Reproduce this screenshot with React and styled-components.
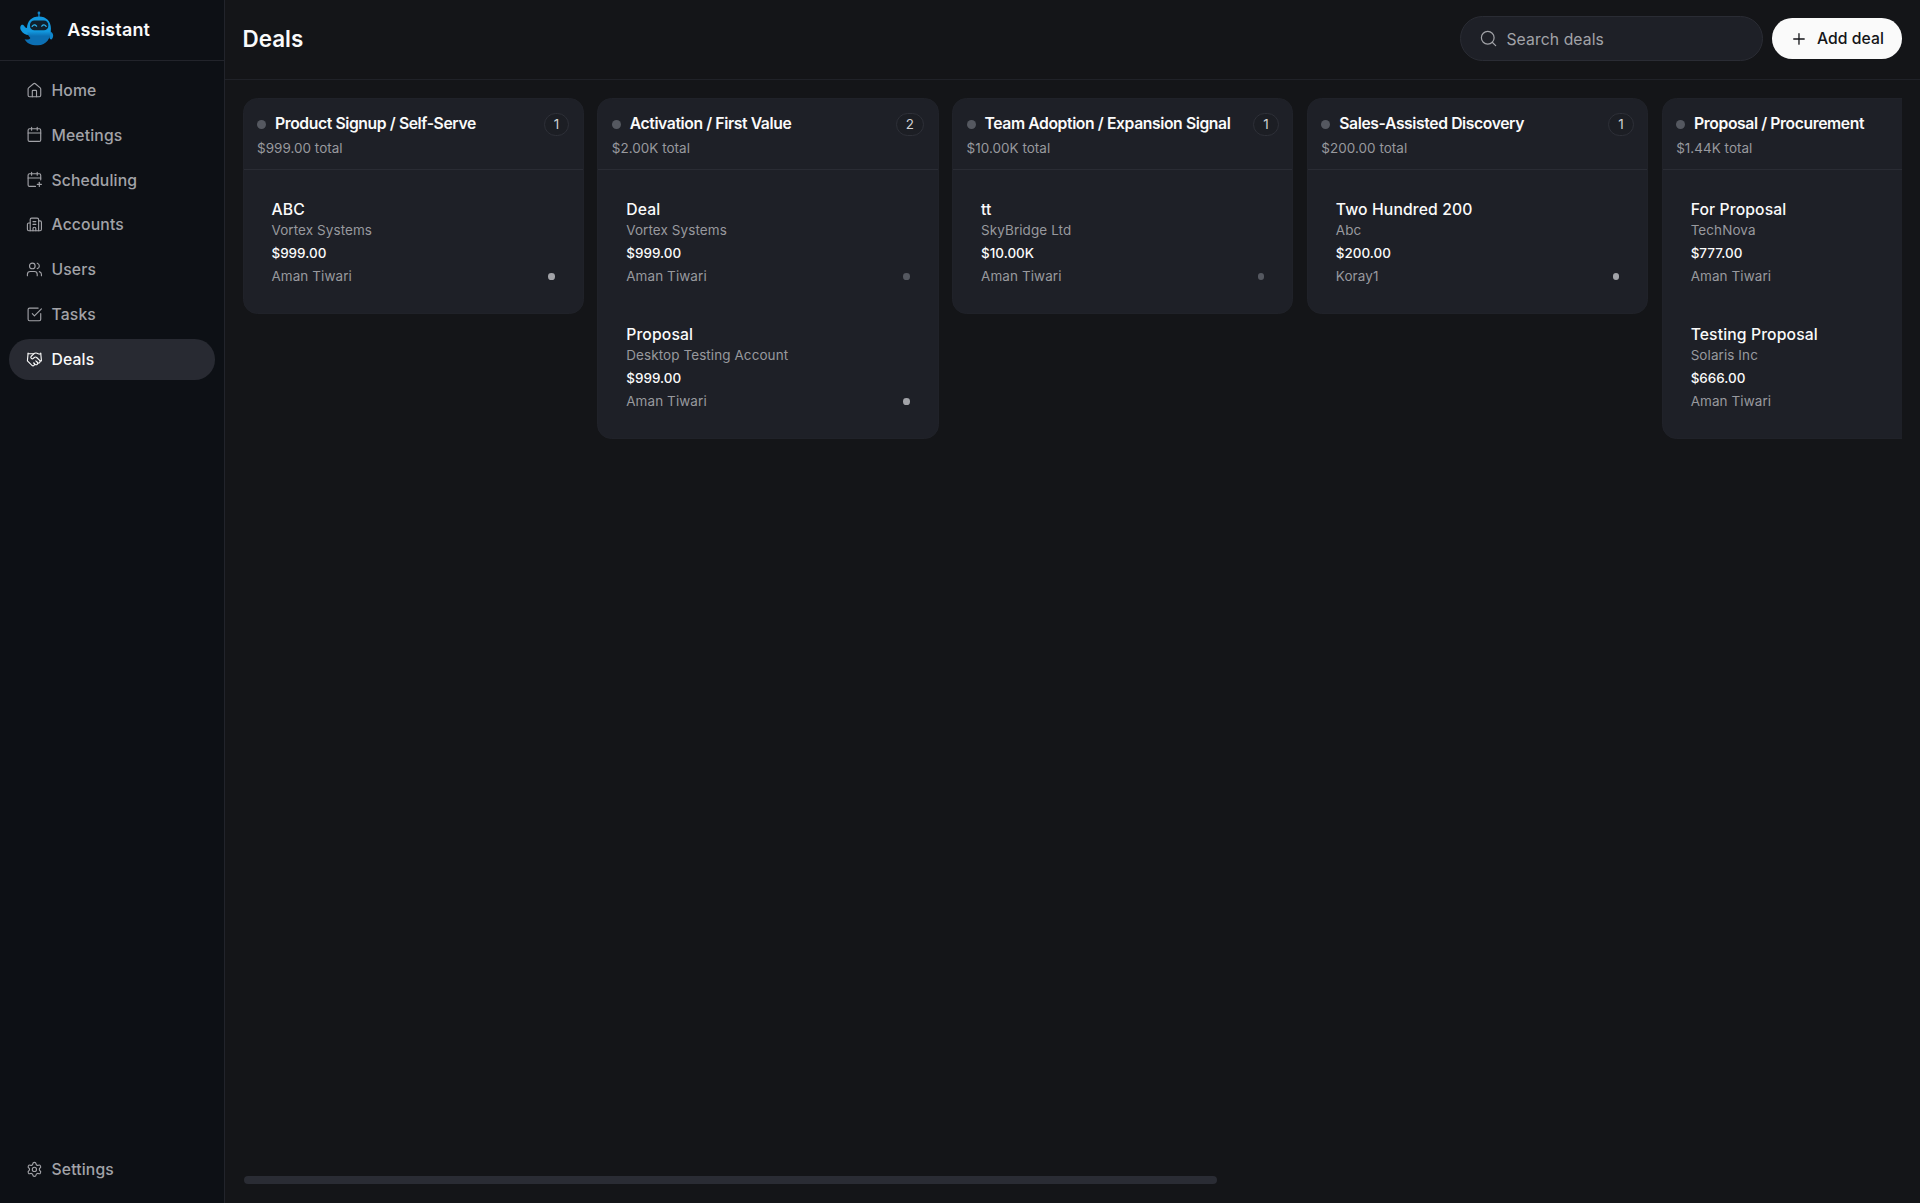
import React from "react";
import styled, { createGlobalStyle } from "styled-components";
import {
  House,
  Calendar,
  CalendarPlus,
  Building2,
  Users,
  SquareCheckBig,
  Handshake,
  Settings,
  Search,
  Plus,
} from "lucide-react";

const GlobalStyle = createGlobalStyle`
  *, *::before, *::after { box-sizing: border-box; }
  html { font-size: calc(100vw / 106.875); }
  body {
    margin: 0;
    background: #141518;
    color: #fafafa;
    font-family: Inter, "Liberation Sans", sans-serif;
    font-size: 0.875rem;
    letter-spacing: 0.01em;
    -webkit-font-smoothing: antialiased;
  }
  button, input { font: inherit; color: inherit; letter-spacing: inherit; }
`;

const Shell = styled.div`
  display: flex;
  height: 100vh;
  overflow: hidden;
`;

const Sidebar = styled.aside`
  display: flex;
  flex-direction: column;
  flex: none;
  width: 12.5rem;
  background: #0d1015;
  border-right: 1px solid #22242b;
`;

const Brand = styled.div`
  display: flex;
  align-items: center;
  gap: 0.75rem;
  height: 3.39rem;
  padding: 0 1rem 0.125rem;
  border-bottom: 1px solid #22242b;
`;

const BrandName = styled.span`
  padding-top: 0.1875rem;
  font-size: 1rem;
  font-weight: 600;
  line-height: 1.5rem;
`;

const LogoMark = styled.svg`
  display: block;
  width: 2rem;
  height: 2rem;
`;

const Nav = styled.nav`
  display: flex;
  flex-direction: column;
  flex: 1;
  gap: 0.25rem;
  padding: 0.5rem 0.5rem 0.75rem;
`;

const NavItem = styled.a`
  display: flex;
  align-items: center;
  gap: 0.46rem;
  height: 2.25rem;
  padding: 0.11rem 0.97rem 0;
  border-radius: 1.125rem;
  background: ${(p) => (p.$active ? "#282a32" : "transparent")};
  color: ${(p) => (p.$active ? "#fafafa" : "#a2a3a8")};
  font-weight: 500;
  line-height: 1.25rem;
  margin-top: ${(p) => (p.$last ? "auto" : 0)};
  svg { width: 0.9375rem; height: 0.9375rem; flex: none; margin-bottom: 0.125rem; }
`;

const Main = styled.main`
  display: flex;
  flex-direction: column;
  flex: 1;
  min-width: 0;
`;

const Header = styled.header`
  display: flex;
  align-items: center;
  justify-content: space-between;
  height: 4.4375rem;
  padding: 0 1rem 0.125rem;
  border-bottom: 1px solid #202228;
`;

const PageTitle = styled.h1`
  margin: 0;
  font-size: 1.25rem;
  font-weight: 600;
  line-height: 1.75rem;
  letter-spacing: 0;
`;

const Actions = styled.div`
  display: flex;
  align-items: center;
  gap: 0.5rem;
`;

const SearchField = styled.label`
  display: flex;
  align-items: center;
  gap: 0.48rem;
  width: 16.88rem;
  height: 2.5rem;
  padding: 0.0625rem 1rem 0;
  border: 1px solid #2a2c34;
  border-radius: 1.25rem;
  background: #1e2027;
  color: #a2a3a8;
  svg { width: 1.0625rem; height: 1.0625rem; flex: none; }
`;

const SearchInput = styled.input`
  flex: 1;
  min-width: 0;
  padding: 0.0625rem 0 0;
  border: 0;
  outline: 0;
  background: transparent;
  letter-spacing: 0.006em;
  &::placeholder { color: #a2a3a8; opacity: 1; }
`;

const AddButton = styled.button`
  display: flex;
  align-items: center;
  gap: 0.5rem;
  height: 2.25rem;
  margin-top: 0.03rem;
  padding: 0 1rem;
  border: 0;
  border-radius: 1.125rem;
  background: #fafafa;
  color: #141518;
  font-weight: 500;
  letter-spacing: 0.005em;
  white-space: nowrap;
  svg { width: 1rem; height: 1rem; flex: none; }
`;

const BoardArea = styled.section`
  display: flex;
  flex-direction: column;
  flex: 1;
  min-height: 0;
  padding: 1rem 1rem 1.0625rem;
`;

const Board = styled.div`
  display: flex;
  align-items: flex-start;
  flex: 1;
  gap: 0.75rem;
  min-height: 0;
  overflow: hidden;
`;

const ScrollThumb = styled.div`
  width: 54.2rem;
  height: 0.4375rem;
  margin-left: 1px;
  border-radius: 0.25rem;
  background: #2a2c34;
`;

const Column = styled.article`
  flex: none;
  width: 19rem;
  border: 1px solid #202229;
  border-radius: 0.8rem;
  background: #1e2027;
`;

const ColumnHeader = styled.header`
  display: flex;
  flex-direction: column;
  gap: 0.22rem;
  padding: 0.78rem 0.75rem 0.625rem;
  border-bottom: 1px solid #2a2c34;
`;

const ColumnTop = styled.div`
  display: flex;
  align-items: center;
  gap: 0.5rem;
  height: 1.3125rem;
`;

const StageDot = styled.span`
  flex: none;
  width: 0.5rem;
  height: 0.5rem;
  border-radius: 50%;
  background: #555860;
`;

const ColumnTitle = styled.h2`
  flex: 1;
  margin: 0;
  font-size: 0.875rem;
  font-weight: 600;
  line-height: 1.25rem;
  letter-spacing: -0.025em;
  white-space: nowrap;
`;

const Count = styled.span`
  padding: 0.03rem 0.5rem 0;
  border: 1px solid #2e3038;
  border-radius: 1rem;
  background: #1c1e24;
  color: #d0d1d4;
  font-size: 0.75rem;
  line-height: 1.1875rem;
`;

const Muted = styled.span`
  color: #98999e;
  font-size: 0.75rem;
  line-height: 1rem;
  letter-spacing: ${(p) => (p.$tight ? "0.002em" : "0.007em")};
`;

const CardList = styled.div`
  display: flex;
  flex-direction: column;
  gap: 0.5rem;
  padding: 0.75rem;
`;

const Card = styled.div`
  display: flex;
  flex-direction: column;
  gap: 0.25rem;
  padding: 0.8125rem 0.75rem 0.6875rem;
  border: 1px solid transparent;
`;

const CardHeading = styled.div`
  display: flex;
  flex-direction: column;
`;

const CardTitle = styled.h3`
  margin: 0;
  font-size: 0.875rem;
  font-weight: 500;
  line-height: 1.25rem;
  letter-spacing: 0.008em;
`;

const Amount = styled.span`
  font-size: 0.75rem;
  font-weight: 500;
  line-height: 1.08rem;
  letter-spacing: 0;
`;

const OwnerRow = styled.div`
  display: flex;
  align-items: center;
  justify-content: space-between;
`;

const OwnerDot = styled.span`
  width: 0.375rem;
  height: 0.375rem;
  margin-bottom: 0.0625rem;
  border-radius: 50%;
  background: ${(p) => (p.$bright ? "#a2a3a8" : "#555860")};
`;

const navItems = [
  ["Home", House],
  ["Meetings", Calendar],
  ["Scheduling", CalendarPlus],
  ["Accounts", Building2],
  ["Users", Users],
  ["Tasks", SquareCheckBig],
  ["Deals", Handshake],
];

const columns = [
  {
    title: "Product Signup / Self-Serve",
    total: "$999.00 total",
    deals: [["ABC", "Vortex Systems", "$999.00", "Aman Tiwari", true]],
  },
  {
    title: "Activation / First Value",
    total: "$2.00K total",
    deals: [
      ["Deal", "Vortex Systems", "$999.00", "Aman Tiwari", false],
      ["Proposal", "Desktop Testing Account", "$999.00", "Aman Tiwari", true],
    ],
  },
  {
    title: "Team Adoption / Expansion Signal",
    total: "$10.00K total",
    deals: [["tt", "SkyBridge Ltd", "$10.00K", "Aman Tiwari", false]],
  },
  {
    title: "Sales-Assisted Discovery",
    total: "$200.00 total",
    deals: [["Two Hundred 200", "Abc", "$200.00", "Koray1", true]],
  },
  {
    title: "Proposal / Procurement",
    total: "$1.44K total",
    deals: [
      ["For Proposal", "TechNova", "$777.00", "Aman Tiwari", false],
      ["Testing Proposal", "Solaris Inc", "$666.00", "Aman Tiwari", false],
    ],
  },
];

function Logo() {
  return (
    <LogoMark viewBox="0 0 36 36" aria-hidden="true">
      <defs>
        <linearGradient id="robot" x1="0" y1="0" x2="0" y2="1">
          <stop offset="0.52" stopColor="#1298de" />
          <stop offset="0.68" stopColor="#0c70b4" />
        </linearGradient>
      </defs>
      <path d="M21 6V2" stroke="#1184c6" strokeWidth="1.3" />
      <circle cx="21" cy="2" r="1.4" fill="#1184c6" />
      <path d="M10 17C7 17.5 6.8 15 5.6 14.2C3 12.8 1.4 16 2.8 19C4.6 22.2 7.6 24 11 24Z" fill="#1298de" />
      <path d="M32.5 20.5C35.8 22 36 26 33.6 28.6C32 28.4 31 27 31.4 24.5Z" fill="#0f86cc" />
      <path
        d="M21 5.4C28.4 5.4 33 10.2 33 17.6C33 28 28.4 34.2 20 34.4C13.6 34.6 8.6 32.2 6.6 28.2C9.4 29 11.4 28.5 12.4 27C9.8 24.8 9 21.8 9 17.6C9 10.2 13.6 5.4 21 5.4Z"
        fill="url(#robot)"
      />
      <rect x="12" y="9.6" width="18.4" height="9.8" rx="4.4" fill="#10202d" />
      <path
        d="M14.2 15.4Q16.4 12.6 18.6 15.2M23.8 15.2Q26 12.6 28.2 15.4"
        fill="none"
        stroke="#2cb2ee"
        strokeWidth="1.3"
        strokeLinecap="round"
      />
    </LogoMark>
  );
}

function DealCard({ deal }) {
  const [title, account, amount, owner, bright] = deal;
  return (
    <Card>
      <CardHeading>
        <CardTitle>{title}</CardTitle>
        <Muted>{account}</Muted>
      </CardHeading>
      <Amount>{amount}</Amount>
      <OwnerRow>
        <Muted>{owner}</Muted>
        <OwnerDot $bright={bright} />
      </OwnerRow>
    </Card>
  );
}

export default function App() {
  return (
    <>
      <GlobalStyle />
      <Shell>
        <Sidebar>
          <Brand>
            <Logo />
            <BrandName>Assistant</BrandName>
          </Brand>
          <Nav>
            {navItems.map(([label, Icon]) => (
              <NavItem key={label} $active={label === "Deals"}>
                <Icon strokeWidth={1.6} />
                {label}
              </NavItem>
            ))}
            <NavItem $last>
              <Settings strokeWidth={1.6} />
              Settings
            </NavItem>
          </Nav>
        </Sidebar>
        <Main>
          <Header>
            <PageTitle>Deals</PageTitle>
            <Actions>
              <SearchField>
                <Search strokeWidth={1.5} />
                <SearchInput placeholder="Search deals" />
              </SearchField>
              <AddButton>
                <Plus strokeWidth={1.75} />
                Add deal
              </AddButton>
            </Actions>
          </Header>
          <BoardArea>
            <Board>
              {columns.map((column, index) => (
                <Column key={column.title}>
                  <ColumnHeader>
                    <ColumnTop>
                      <StageDot />
                      <ColumnTitle>{column.title}</ColumnTitle>
                      {index < 4 && <Count>{column.deals.length}</Count>}
                    </ColumnTop>
                    <Muted $tight>{column.total}</Muted>
                  </ColumnHeader>
                  <CardList>
                    {column.deals.map((deal) => (
                      <DealCard key={deal[0]} deal={deal} />
                    ))}
                  </CardList>
                </Column>
              ))}
            </Board>
            <ScrollThumb />
          </BoardArea>
        </Main>
      </Shell>
    </>
  );
}
